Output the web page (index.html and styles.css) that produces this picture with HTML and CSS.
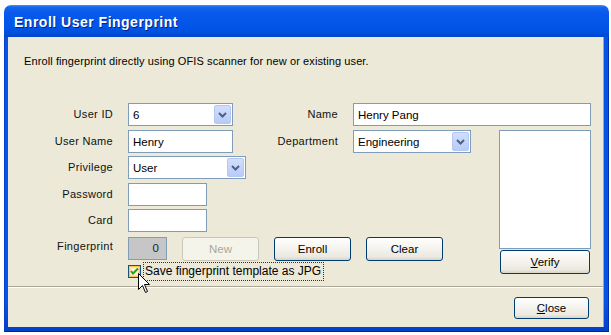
FILE: index.html
```html
<!DOCTYPE html>
<html lang="en">
<head>
  <meta charset="UTF-8">
  <title>Enroll User Fingerprint</title>
  <link rel="stylesheet" href="styles.css">
</head>
<body>
  <div class="window">
    <div class="titlebar">
      <span class="title">Enroll User Fingerprint</span>
    </div>
    <div class="frame">
      <div class="client">
        <p class="intro">Enroll fingerprint directly using OFIS scanner for new or existing user.</p>

        <div class="form">
          <div class="lbl row1">User ID</div>
          <div class="field combo w105 row1 col2"><span>6</span><span class="drop"><svg width="9" height="6" viewBox="0 0 9 6"><path d="M1 1 L4.5 4.5 L8 1" fill="none" stroke="#4d6185" stroke-width="2"/></svg></span></div>
          <div class="lbl rlbl row1">Name</div>
          <div class="field wide row1">Henry Pang</div>

          <div class="lbl row2">User Name</div>
          <div class="field w105 row2 col2">Henry</div>
          <div class="lbl rlbl row2">Department</div>
          <div class="field combo w118 row2 col4"><span>Engineering</span><span class="drop"><svg width="9" height="6" viewBox="0 0 9 6"><path d="M1 1 L4.5 4.5 L8 1" fill="none" stroke="#4d6185" stroke-width="2"/></svg></span></div>

          <div class="side">
            <div class="listbox"></div>
            <button class="btn verify"><u>V</u>erify</button>
          </div>

          <div class="lbl row3">Privilege</div>
          <div class="field combo w118 row3 col2"><span>User</span><span class="drop"><svg width="9" height="6" viewBox="0 0 9 6"><path d="M1 1 L4.5 4.5 L8 1" fill="none" stroke="#4d6185" stroke-width="2"/></svg></span></div>

          <div class="lbl row4">Password</div>
          <div class="field w79 row4 col2"></div>

          <div class="lbl row5">Card</div>
          <div class="field w79 row5 col2"></div>

          <div class="lbl lbl-fp row6">Fingerprint</div>
          <div class="actions row6">
            <div class="count">0</div>
            <button class="btn" disabled>New</button>
            <button class="btn">Enroll</button>
            <button class="btn">Clear</button>
          </div>

          <div class="check-row row7">
            <svg class="checkbox" width="13" height="13" viewBox="0 0 13 13">
              <rect x="0.5" y="0.5" width="12" height="12" fill="#fff" stroke="#1c5180"/>
              <rect x="1.5" y="1.5" width="10" height="10" fill="none" stroke="#f9c453"/>
              <rect x="2.5" y="2.5" width="8" height="8" fill="#fdf0cf" stroke="#fce1a0"/>
              <path d="M3 6 L5 8.5 L10 3.5" fill="none" stroke="#21a121" stroke-width="2"/>
            </svg>
            <span class="check-label">Save fingerprint template as JPG</span>
            <svg class="cursor" width="13" height="21" viewBox="0 0 13 21">
              <polygon points="0.5,0.5 0.5,16.5 4.5,12.5 7.5,19.5 9.5,18.5 6.5,11.5 11.5,11.5" fill="#fff" stroke="#000"/>
            </svg>
          </div>
        </div>

        <div class="separator"></div>
        <div class="footer">
          <button class="btn"><u>C</u>lose</button>
        </div>
      </div>
    </div>
  </div>
</body>
</html>
```

FILE: styles.css
```css
* {
  box-sizing: border-box;
}

body {
  margin: 0;
  background-color: #fff;
  font-family: 'Liberation Sans', Arial, sans-serif;
  font-size: 11px;
  color: #000;
}

.window {
  margin: 5px 0 0 4px;
  width: 605px;
  height: 327px;
  display: flex;
  flex-direction: column;
}

.titlebar {
  height: 32px;
  border-radius: 7px 7px 0 0;
  background: linear-gradient(#4a94fa 0, #1466ee 2px, #0859ec 8px, #0055e6 22px, #0050de 28px, #0045cf 32px);
  padding-left: 10px;
  display: flex;
  align-items: center;
}

.title {
  color: #fff;
  font-size: 14px;
  font-weight: bold;
  letter-spacing: 0.5px;
  text-shadow: 1px 1px 0 #0a1e8a;
  padding-top: 1px;
}

.frame {
  flex: 1;
  padding: 0 5px 5px 4px;
  background: linear-gradient(#0654e4 90%, #0140c8);
  box-shadow: inset 1px 0 #0b3fcf, inset -1px 0 #0030b0, inset 0 -1px #00229a;
}

.client {
  height: 100%;
  background-color: #ece9d8;
  box-shadow: inset -1px 0 #a7a69c;
  display: flex;
  flex-direction: column;
}

.intro {
  margin: 17px 0 0 16px;
  line-height: 14px;
  letter-spacing: 0.1px;
}

.form {
  margin: 35px 0 0 12px;
  display: grid;
  grid-template-columns: 108px 122px 103px 146px 92px;
  grid-template-rows: 27px 26px 27px 26px 28px 25px 23px;
  width: 571px;
}

.row1 { grid-row: 1; }
.row2 { grid-row: 2; }
.row3 { grid-row: 3; }
.row4 { grid-row: 4; }
.row5 { grid-row: 5; }
.row6 { grid-row: 6; }
.row7 { grid-row: 7; }

.col2 { grid-column: 2; }
.col4 { grid-column: 4; }

.lbl {
  grid-column: 1;
  text-align: right;
  padding-right: 15px;
  line-height: 22px;
  letter-spacing: 0.3px;
  color: #111;
}

.rlbl {
  grid-column: 3;
}

.lbl-fp {
  line-height: 19px;
}

.field {
  height: 23px;
  background-color: #fff;
  border: 1px solid #7f9db9;
  padding: 0 3px 0 4px;
  display: flex;
  align-items: center;
  font-size: 11.5px;
  align-self: start;
}

.w105 { width: 105px; }
.w118 { width: 118px; }
.w79 { width: 79px; }

.wide {
  grid-column: 4 / span 2;
  width: 238px;
}

.combo {
  justify-content: space-between;
  padding-right: 1px;
}

.drop {
  width: 17px;
  height: 19px;
  border: 1px solid #b5c8f5;
  border-radius: 2px;
  background: linear-gradient(#d2defc, #b8cbf7);
  display: flex;
  align-items: center;
  justify-content: center;
}

.side {
  grid-column: 5;
  grid-row: 2 / 8;
  display: flex;
  flex-direction: column;
  gap: 1px;
}

.listbox {
  height: 119px;
  width: 92px;
  background-color: #fff;
  border: 1px solid #7f9db9;
}

.btn {
  font-family: 'Liberation Sans', Arial, sans-serif;
  font-size: 11.5px;
  color: #000;
  height: 24px;
  width: 77px;
  border: 1px solid #003c74;
  border-radius: 3px;
  background: linear-gradient(#fff 0, #f6f5f0 40%, #ebe9e0 85%, #d8d4c8 100%);
  padding: 0;
}

.btn:disabled {
  color: #aca899;
  border-color: #c9c7ba;
  background: #f5f4ea;
}

.verify {
  width: 90px;
  margin-left: 1px;
}

.actions {
  grid-column: 2 / span 3;
  display: flex;
  gap: 15px;
  align-items: flex-start;
}

.count {
  width: 39px;
  height: 23px;
  background-color: #c6c6c6;
  border: 1px solid #7f9db9;
  text-align: right;
  padding-right: 7px;
  line-height: 21px;
  font-size: 11.5px;
  color: #222;
}

.check-row {
  grid-column: 2 / span 3;
  display: flex;
  align-items: center;
  gap: 2px;
  position: relative;
  height: 19px;
}

.checkbox {
  flex: none;
}

.check-label {
  border: 1px dotted #333;
  font-size: 12px;
  line-height: 17px;
  padding: 0 2px 0 1px;
}

.cursor {
  position: absolute;
  left: 10px;
  top: 11px;
}

.separator {
  margin-top: 1px;
  height: 2px;
  border-top: 1px solid #aca899;
  border-bottom: 1px solid #fff;
  margin-right: 1px;
}

.footer {
  display: flex;
  justify-content: flex-end;
  padding: 9px 15px 0 0;
}

.footer .btn {
  width: 75px;
  height: 22px;
}
```
